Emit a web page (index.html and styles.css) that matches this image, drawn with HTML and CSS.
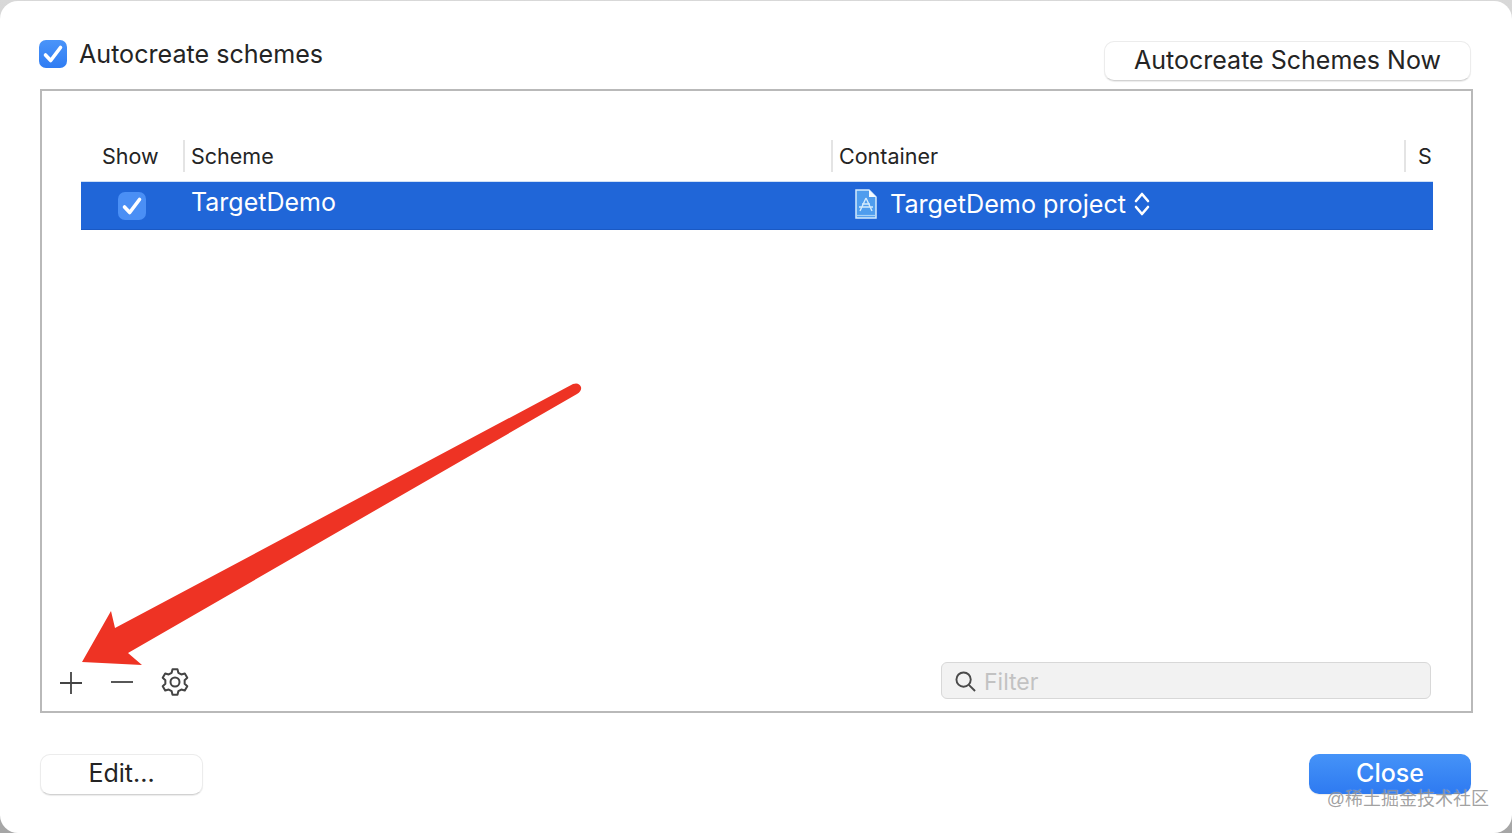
FILE: index.html
```html
<!DOCTYPE html>
<html lang="en">
<head>
<meta charset="utf-8">
<title>Manage Schemes</title>
<link rel="stylesheet" href="styles.css">
</head>
<body>
<div class="window">
  <header class="top">
    <label class="auto">
      <span class="check check-main"><svg viewBox="0 0 28 28"><path d="M6.500 15l5.200 5.500L21.500 7.500" /></svg></span>
      <span>Autocreate schemes</span>
    </label>
    <button class="btn btn-now">Autocreate Schemes Now</button>
  </header>
  <main class="panel">
    <div class="table">
      <div class="thead">
        <div class="th th-show">Show</div>
        <div class="th">Scheme</div>
        <div class="th">Container</div>
        <div class="th th-s">S</div>
      </div>
      <div class="row">
        <div class="cell-show"><span class="check check-row"><svg viewBox="0 0 28 28"><path d="M6.500 15l5.200 5.500L21.500 7.500" /></svg></span></div>
        <div class="cell-name">TargetDemo</div>
        <div class="cell-cont">
          <svg class="doc" viewBox="0 0 22 30"><path class="doc-body" d="M1 1h13l7 7v21H1z"/><path class="doc-fold" d="M14 1v7h7z"/><path class="doc-a" d="M11 9L5 22M11 9l6 13M4 18h14M7 15h8"/><path class="doc-line" d="M2 26.500h18"/></svg>
          <span>TargetDemo project</span>
          <svg class="updown" viewBox="0 0 16 24"><path d="M2 9l6-7 6 7M2 15l6 7 6-7"/></svg>
        </div>
      </div>
    </div>
    <div class="tools">
      <svg class="ic ic-plus" viewBox="0 0 22 22"><path d="M11 0v22M0 11h22"/></svg>
      <svg class="ic ic-minus" viewBox="0 0 22 22"><path d="M0 11h22"/></svg>
      <svg class="ic ic-gear" viewBox="0 0 28 28"><path d="M10.650 4.790L11.520 1.240H16.480L17.350 4.790L20.300 6.490L23.810 5.470L26.290 9.770L23.650 12.300V15.700L26.290 18.230L23.810 22.530L20.300 21.510L17.350 23.210L16.480 26.760H11.520L10.650 23.210L7.700 21.510L4.190 22.530L1.710 18.230L4.350 15.700V12.300L1.710 9.770L4.190 5.470L7.700 6.490Z"/><circle cx="14" cy="14" r="4.500"/></svg>
      <div class="filter">
        <svg class="search" viewBox="0 0 22 22"><circle cx="9" cy="9" r="7.500"/><path d="M14.500 14.500L21 21"/></svg>
        <span>Filter</span>
      </div>
    </div>
  </main>
  <footer class="bottom">
    <button class="btn btn-edit">Edit...</button>
    <button class="btn btn-close">Close</button>
  </footer>
</div>
<svg class="arrow" viewBox="0 0 1512 833"><path d="M82 662L111 611L115 628L573 384Q579 382 581 387Q582 391 577 394L128 653L142 665Z"/></svg>
<div class="mark">@稀土掘金技术社区</div>
</body>
</html>
```
FILE: styles.css
```css
* { box-sizing: border-box; }
html, body { margin: 0; height: 833px; overflow: hidden; }
body {
  position: relative;
  background: linear-gradient(#d8d8d8, #a6a6a6);
  font-family: Inter, "Liberation Sans", sans-serif;
  color: #242424;
}
.window {
  height: 832px;
  margin-top: 1px;
  display: flex;
  flex-direction: column;
  background: #fff;
  border-radius: 18px;
  padding: 0 39px;
}
.top {
  height: 88px;
  padding: 39px 2px 0 0;
  display: flex;
  justify-content: space-between;
  align-items: flex-start;
}
.auto {
  display: flex;
  align-items: center;
  gap: 12px;
  font-size: 25.100px;
  line-height: 28px;
}
.check {
  display: block;
  width: 28px;
  height: 28px;
  border-radius: 7px;
  background: linear-gradient(#4a94f9, #2f7cf3);
}
.check svg { display: block; width: 28px; height: 28px; }
.check path { fill: none; stroke: #fff; stroke-width: 3.600; stroke-linecap: round; stroke-linejoin: round; }
.btn {
  font: inherit;
  font-size: 25px;
  color: #242424;
  background: #fff;
  border: 1px solid #ececec;
  border-bottom-color: #d2d2d2;
  border-radius: 10px;
  box-shadow: 0 1px 1px rgba(0,0,0,.08);
  padding: 0 0 2px;
}
.btn-now { width: 367px; height: 40px; margin-top: 1px; }
.panel {
  width: 1433px;
  height: 624px;
  margin-left: 1px;
  border: 2px solid #b9b9b9;
  background: #fff;
  display: flex;
  flex-direction: column;
  justify-content: space-between;
}
.table { padding: 49px 38px 0 39px; }
.thead {
  display: grid;
  grid-template-columns: 102px 648px 573px 29px;
  height: 32px;
  font-size: 21.500px;
}
.th {
  border-left: 2px solid #e4e4e4;
  padding-left: 6px;
  line-height: 32px;
  white-space: nowrap;
}
.th-show { border: 0; padding-left: 21px; }
.th-s { padding-left: 12px; }
.row {
  margin-top: 9px;
  height: 49px;
  background: #2066d8;
  border-top: 1px solid #cfe0f5;
  border-bottom: 1px solid #1a59c4;
  color: #fff;
  display: grid;
  grid-template-columns: 110px 664px 1fr;
  font-size: 25px;
}
.cell-show { padding: 10px 0 0 37px; }
.check-row { background: #4a8ff5; }
.cell-name { line-height: 40px; }
.cell-cont { display: flex; align-items: center; gap: 13px; height: 44px; font-size: 25.200px; }
.doc { width: 22px; height: 30px; flex: none; }
.doc-body { fill: #4f9dee; stroke: #d3eafc; stroke-width: 1.500; }
.doc-fold { fill: #f4faff; }
.doc-a { fill: none; stroke: #d3eafc; stroke-width: 1.400; }
.doc-line { stroke: #a8d2f7; stroke-width: 1.200; fill: none; }
.updown { width: 16px; height: 24px; margin-left: -5px; flex: none; }
.updown path { fill: none; stroke: #fff; stroke-width: 2.600; stroke-linecap: round; stroke-linejoin: round; }
.tools {
  display: flex;
  align-items: center;
  height: 37px;
  margin-bottom: 12px;
  padding-left: 18px;
}
.ic { flex: none; fill: none; stroke: #444; stroke-width: 1.800; }
.ic-plus { width: 22px; height: 22px; margin-top: 4px; }
.ic-minus { width: 22px; height: 22px; margin-left: 29px; margin-top: 2px; }
.ic-gear { width: 28px; height: 28px; margin-left: 28px; margin-top: 2px; stroke-width: 2; stroke-linejoin: round; }
.filter {
  width: 490px;
  height: 37px;
  margin-left: 752px;
  border: 1px solid #d8d8d8;
  border-radius: 6px;
  background: #f2f2f2;
  display: flex;
  align-items: center;
  gap: 8px;
  padding: 2px 0 0 13px;
  font-size: 23px;
  color: #c2c2c2;
}
.search { width: 21px; height: 21px; fill: none; stroke: #4a4a4a; stroke-width: 2; flex: none; }
.bottom {
  padding: 41px 2px 0 1px;
  display: flex;
  justify-content: space-between;
  align-items: flex-start;
}
.btn-edit { width: 163px; height: 41px; padding-bottom: 4px; }
.btn-close {
  width: 162px;
  height: 40px;
  color: #fff;
  border: 0;
  background: linear-gradient(#4593f8, #2e7af1);
  font-weight: 500;
}
.arrow { position: absolute; left: 0; top: 0; width: 1512px; height: 833px; pointer-events: none; }
.arrow path { fill: #ee3324; }
.mark {
  position: absolute;
  right: 23px;
  top: 788px;
  font-family: "Liberation Sans", "Noto Sans CJK SC", sans-serif;
  font-size: 18px;
  line-height: 22px;
  color: rgba(120,120,120,.7);
  text-shadow: 0 0 1px rgba(255,255,255,.6);
  white-space: nowrap;
}
```
